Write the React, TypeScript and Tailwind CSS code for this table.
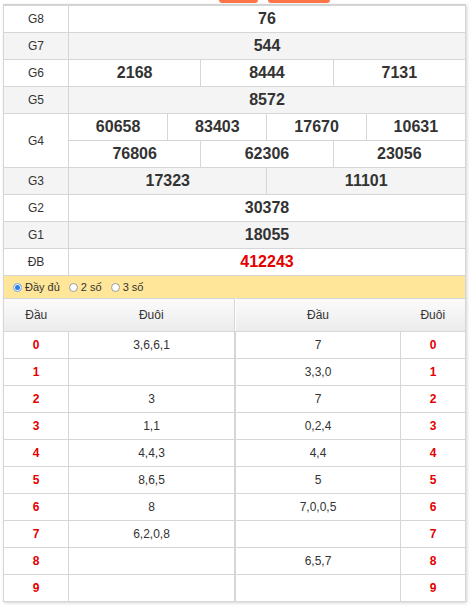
import React from "react";

const results = [
  { label: "G8", rows: [["76"]] },
  { label: "G7", rows: [["544"]] },
  { label: "G6", rows: [["2168", "8444", "7131"]] },
  { label: "G5", rows: [["8572"]] },
  { label: "G4", rows: [["60658", "83403", "17670", "10631"], ["76806", "62306", "23056"]] },
  { label: "G3", rows: [["17323", "11101"]] },
  { label: "G2", rows: [["30378"]] },
  { label: "G1", rows: [["18055"]] },
  { label: "ĐB", rows: [["412243"]] },
];

const spans: Record<number, number> = { 1: 12, 2: 6, 3: 4, 4: 3 };

const tails = ["3,6,6,1", "", "3", "1,1", "4,4,3", "8,6,5", "8", "6,2,0,8", "", ""];
const heads = ["7", "3,3,0", "7", "0,2,4", "4,4", "5", "7,0,0,5", "", "6,5,7", ""];

const cell = "border border-[#d6d6d6] text-center p-0";

function Radio({ on, label }: { on?: boolean; label: string }) {
  return (
    <label className="flex items-center gap-[3px]">
      {on ? (
        <span className="w-[9px] h-[9px] rounded-full bg-[#2b7de9] border border-[#8fb8f0] shadow-[inset_0_0_0_1px_#fff]" />
      ) : (
        <span className="w-[9px] h-[9px] rounded-full bg-white border border-[#9a9a9a]" />
      )}
      <span>{label}</span>
    </label>
  );
}

export default function App() {
  return (
    <div className="w-[470px] h-[606px] bg-white overflow-hidden text-[#333]" style={{ fontFamily: '"Liberation Sans", Arial, sans-serif' }}>
      {/* cut-off tabs above */}
      <div className="h-[4px] flex">
        <div className="ml-[219px] w-[39px] h-[3px] rounded-b-[6px] bg-[#ff7548]" />
        <div className="ml-[10px] w-[62px] h-[3px] rounded-b-[6px] bg-[#ff7548]" />
      </div>

      <div className="ml-[3px] w-[463px] border-t border-[#d2d2d2] shadow-[1px_1px_3px_rgba(0,0,0,0.18)]">
        <table className="w-[463px] table-fixed border-collapse">
          <colgroup>
            <col className="w-[65px]" />
            {Array.from({ length: 12 }).map((_, i) => (
              <col key={i} />
            ))}
          </colgroup>
          <tbody>
            {results.map((r, i) =>
              r.rows.map((row, j) => (
                <tr key={r.label + j} className={(i % 2 ? "bg-[#f4f4f4]" : "bg-white") + " h-[27px]"}>
                  {j === 0 && (
                    <td rowSpan={r.rows.length} className={cell + " text-[12px]"}>
                      {r.label}
                    </td>
                  )}
                  {row.map((n) => (
                    <td
                      key={n}
                      colSpan={spans[row.length]}
                      className={cell + " text-[16px] font-bold " + (r.label === "ĐB" ? "text-[#e50000]" : "text-[#333]")}
                    >
                      {n}
                    </td>
                  ))}
                </tr>
              ))
            )}
          </tbody>
        </table>

        <div className="h-[22px] bg-[#ffe699] border-x border-[#d6d6d6] flex items-center gap-[9px] pl-[9px] text-[11px] text-[#333]">
          <Radio on label="Đầy đủ" />
          <Radio label="2 số" />
          <Radio label="3 số" />
        </div>

        <div className="flex">
          <table className="w-[232px] table-fixed border-collapse">
            <colgroup>
              <col className="w-[65px]" />
              <col />
            </colgroup>
            <thead>
              <tr className="h-[33px] bg-linear-to-b from-[#fbfbfb] to-[#ebebeb] text-[12px]">
                <th className="font-normal border-y border-l border-[#d6d6d6]">Đầu</th>
                <th className="font-normal border-y border-r border-[#d6d6d6]">Đuôi</th>
              </tr>
            </thead>
            <tbody>
              {tails.map((t, i) => (
                <tr key={i} className="h-[27px]">
                  <td className={cell + " text-[12px] font-bold text-[#e50000]"}>{i}</td>
                  <td className={cell + " text-[12px]"}>{t}</td>
                </tr>
              ))}
            </tbody>
          </table>
          <table className="w-[231px] table-fixed border-collapse">
            <colgroup>
              <col />
              <col className="w-[65px]" />
            </colgroup>
            <thead>
              <tr className="h-[33px] bg-linear-to-b from-[#fbfbfb] to-[#ebebeb] text-[12px]">
                <th className="font-normal border-y border-[#d6d6d6]">Đầu</th>
                <th className="font-normal border-y border-r border-[#d6d6d6]">Đuôi</th>
              </tr>
            </thead>
            <tbody>
              {heads.map((h, i) => (
                <tr key={i} className="h-[27px]">
                  <td className={cell + " text-[12px]"}>{h}</td>
                  <td className={cell + " text-[12px] font-bold text-[#e50000]"}>{i}</td>
                </tr>
              ))}
            </tbody>
          </table>
        </div>
      </div>
    </div>
  );
}
